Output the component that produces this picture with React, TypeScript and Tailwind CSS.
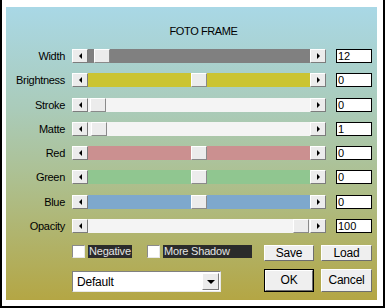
const font = { fontFamily: '"Liberation Sans", Arial, sans-serif' };

type Row = {
  label: string;
  value: string;
  track: string;
  thumb: string;
};

const rows: Row[] = [
  { label: "Width", value: "12", track: "bg-[#808080]", thumb: "ml-[6px]" },
  { label: "Brightness", value: "0", track: "bg-[#cbc432]", thumb: "ml-[103px]" },
  { label: "Stroke", value: "0", track: "bg-[#f4f4f4]", thumb: "ml-[2px]" },
  { label: "Matte", value: "1", track: "bg-[#f4f4f4]", thumb: "ml-[3px]" },
  { label: "Red", value: "0", track: "bg-[#cb9090]", thumb: "ml-[103px]" },
  { label: "Green", value: "0", track: "bg-[#90c690]", thumb: "ml-[103px]" },
  { label: "Blue", value: "0", track: "bg-[#7ea8cd]", thumb: "ml-[103px]" },
  { label: "Opacity", value: "100", track: "bg-[#f4f4f4]", thumb: "ml-[205px]" },
];

function ArrowBtn({ dir }: { dir: "left" | "right" }) {
  return (
    <div className="w-[16px] h-[14px] flex items-center justify-center bg-[#ececec] border border-t-white border-l-white border-r-[#7c7c7c] border-b-[#7c7c7c]">
      {dir === "left" ? (
        <div className="w-0 h-0 border-y-[3px] border-y-transparent border-r-[3px] border-r-black" />
      ) : (
        <div className="w-0 h-0 border-y-[3px] border-y-transparent border-l-[3px] border-l-black" />
      )}
    </div>
  );
}

function SliderRow({ row }: { row: Row }) {
  return (
    <div className="h-[24.3px] flex items-start">
      <div className="w-[59px] h-[14px] text-right text-[11px] leading-[14px] tracking-[-0.3px] text-black">
        {row.label}
      </div>
      <div className="ml-[7px] flex">
        <ArrowBtn dir="left" />
        <div className={`w-[222px] h-[14px] flex ${row.track}`}>
          <div
            className={`w-[16px] h-[14px] bg-[#ececec] border border-t-white border-l-white border-r-[#8a8a8a] border-b-[#8a8a8a] ${row.thumb}`}
          />
        </div>
        <ArrowBtn dir="right" />
      </div>
      <div className="ml-[10px] w-[36px] h-[14px] bg-white border border-black text-[11px] leading-[12px] pl-[1px] text-black">
        {row.value}
      </div>
    </div>
  );
}

function Check({ label, w }: { label: string; w: string }) {
  return (
    <div className="flex items-center">
      <div className="w-[13px] h-[13px] bg-white border border-t-[#8a8a8a] border-l-[#8a8a8a] border-r-[#e8e8e8] border-b-[#e8e8e8]" />
      <div className={`ml-[3px] h-[13px] bg-[#2b2b2b] text-[#e4e4e4] text-[11px] leading-[13px] pl-[1px] tracking-[-0.2px] ${w}`}>
        {label}
      </div>
    </div>
  );
}

function Btn({ label, tall, def }: { label: string; tall?: boolean; def?: boolean }) {
  return (
    <div className={`${tall ? "h-[23px]" : "h-[16px]"} ${def ? "border border-black" : ""}`}>
      <div className="w-full h-full flex items-center justify-center bg-[#efefef] border border-t-white border-l-white border-r-[#6e6e6e] border-b-[#6e6e6e] text-[12px] text-black tracking-[-0.2px]">
        {label}
      </div>
    </div>
  );
}

export default function App() {
  return (
    <div className="w-[385px] h-[308px] bg-white border-l-2 border-r-2 border-b-2 border-black overflow-hidden" style={font}>
      <div className="ml-[4px] mt-[7px] w-[371px] h-[293px] bg-[linear-gradient(to_bottom,#a9d8e6_0%,#aacbb9_35%,#adbf8e_60%,#b4a644_100%)]">
        <div className="pt-[17px] h-[31px] text-center text-[11px] leading-[14px] tracking-[-0.4px] text-black pl-[24px]">
          FOTO FRAME
        </div>
        <div className="mt-[11px] flex flex-col">
          {rows.map((r) => (
            <SliderRow key={r.label} row={r} />
          ))}
        </div>
        <div className="mt-[2px] flex">
          <div className="w-[258px] pl-[66px]">
            <div className="flex gap-[15px]">
              <Check label="Negative" w="w-[44px]" />
              <Check label="More Shadow" w="w-[89px]" />
            </div>
            <div className="mt-[13px] w-[149px] h-[21px] bg-white border border-t-[#808080] border-l-[#808080] border-r-[#e8e8e8] border-b-[#e8e8e8] flex items-center">
              <div className="flex-1 pl-[4px] text-[12px] text-black tracking-[-0.2px]">Default</div>
              <div className="w-[17px] h-[17px] mr-[1px] flex items-center justify-center bg-[#ececec] border border-t-white border-l-white border-r-[#7c7c7c] border-b-[#7c7c7c]">
                <div className="w-0 h-0 border-x-[4px] border-x-transparent border-t-[4px] border-t-black" />
              </div>
            </div>
          </div>
          <div className="grid grid-cols-[50px_51px] gap-x-[7px] gap-y-[7px]">
            <Btn label="Save" />
            <Btn label="Load" />
            <Btn label="OK" tall def />
            <Btn label="Cancel" tall />
          </div>
        </div>
      </div>
    </div>
  );
}
